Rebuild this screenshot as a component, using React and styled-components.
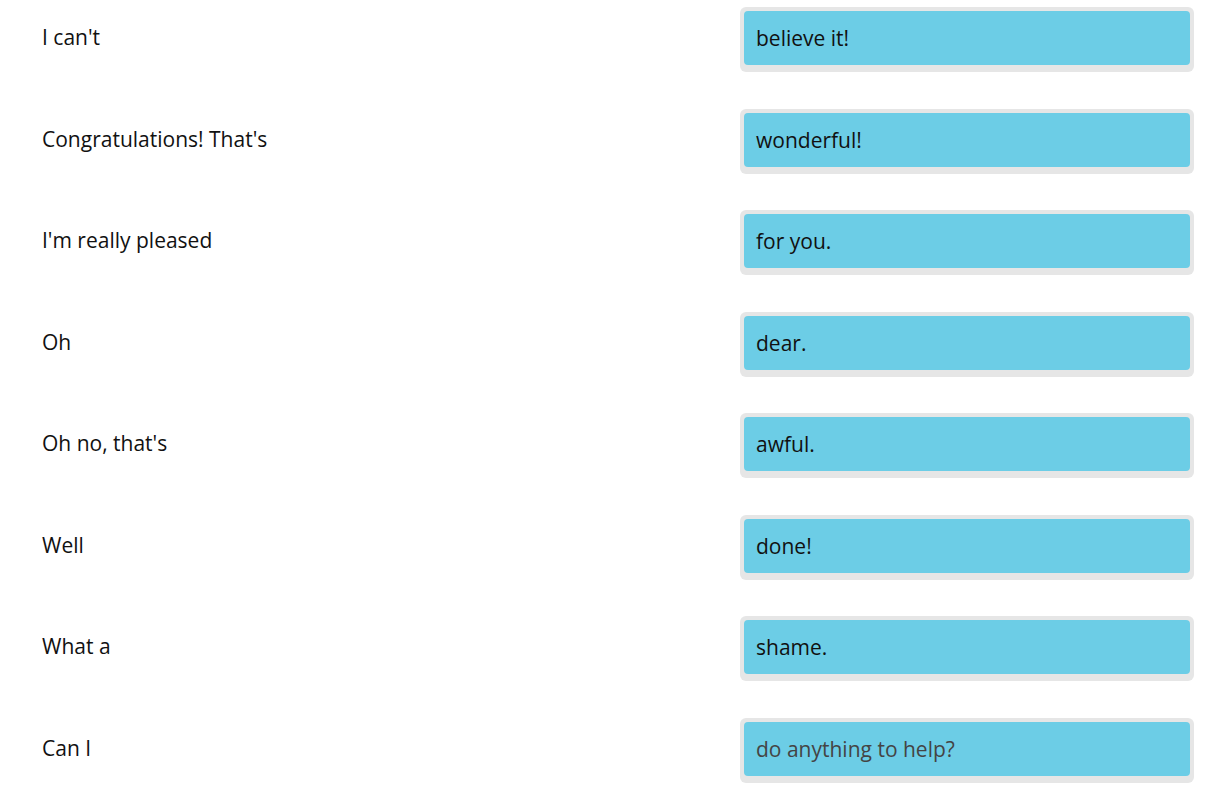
import React from "react";
import styled, { createGlobalStyle } from "styled-components";

const rows = [
  ["I can't", "believe it!"],
  ["Congratulations! That's", "wonderful!"],
  ["I'm really pleased", "for you."],
  ["Oh", "dear."],
  ["Oh no, that's", "awful."],
  ["Well", "done!"],
  ["What a", "shame."],
  ["Can I", "do anything to help?", true],
];

const App = () => {
  return (
    <>
      <GlobalStyle />
      <Page>
        {rows.map(([start, end, placeholder]) => (
          <Row key={start}>
            <Prompt>{start}</Prompt>
            <Slot>
              <Answer $placeholder={placeholder}>{end}</Answer>
            </Slot>
          </Row>
        ))}
      </Page>
    </>
  );
};

export default App;

const GlobalStyle = createGlobalStyle`
  body {
    margin: 0;
    background: #fff;
    font-family: "Open Sans", "Liberation Sans", sans-serif;
  }
`;

const Page = styled.div`
  display: flex;
  flex-direction: column;
  gap: 36.57px;
  padding: 7px 37px 0 42px;
`;

const Row = styled.div`
  display: grid;
  grid-template-columns: 1fr 454px;
  align-items: center;
  height: 65px;
`;

const Prompt = styled.div`
  font-size: 21px;
  color: #111;
  margin-bottom: 5px;
`;

const Slot = styled.div`
  background: #e6e6e6;
  border-radius: 6px;
  padding: 4px 4px 7px;
`;

const Answer = styled.div`
  height: 54px;
  box-sizing: border-box;
  display: flex;
  align-items: center;
  padding: 0 12px;
  background: #6ccde6;
  border-radius: 4px;
  font-size: 21px;
  color: ${(p) => (p.$placeholder ? "#444" : "#111")};
`;
